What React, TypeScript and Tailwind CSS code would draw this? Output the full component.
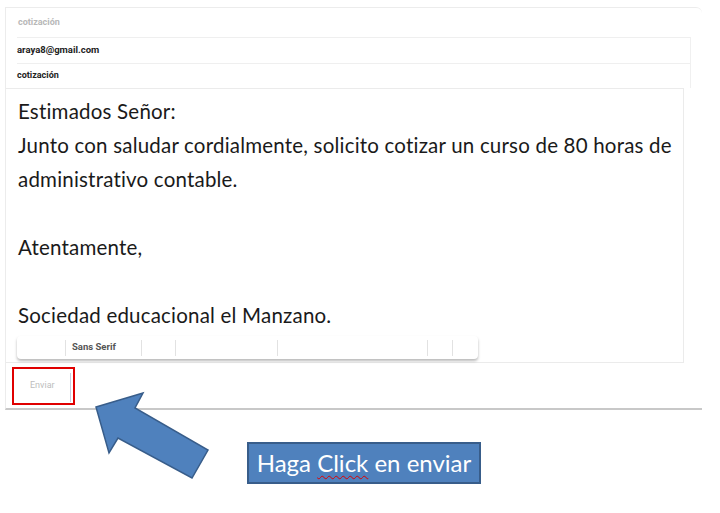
const bodyFont = { fontFamily: 'Lato, "Open Sans", sans-serif' }

function ToolbarSep() {
  return <div className="h-4 w-px bg-[#e2e2e2]" />
}

function Toolbar() {
  return (
    <div className="flex h-[23px] w-[461px] items-center rounded-sm bg-white shadow-[0_2px_3px_rgba(0,0,0,0.28)]">
      <div className="w-[48px]" />
      <ToolbarSep />
      <div className="flex w-[75px] items-center pl-[6px] text-[9.5px] font-bold text-[#555]" style={{ fontFamily: 'Roboto, sans-serif' }}>
        Sans Serif
      </div>
      <ToolbarSep />
      <div className="w-[33px]" />
      <ToolbarSep />
      <div className="w-[101px]" />
      <ToolbarSep />
      <div className="w-[149px]" />
      <ToolbarSep />
      <div className="w-[24px]" />
      <ToolbarSep />
    </div>
  )
}

function Arrow() {
  return (
    <svg className="pointer-events-none absolute left-0 top-0" width="720" height="513" viewBox="0 0 720 513">
      <polygon
        points="96,407 143,393 135,408 208,450 192,478 118,438 109,453"
        fill="#4f81bd"
        stroke="#385d8a"
        strokeWidth="1.5"
        strokeLinejoin="miter"
      />
    </svg>
  )
}

export default function App() {
  const lines = [
    'Estimados Señor:',
    'Junto con saludar cordialmente, solicito cotizar un curso de 80 horas de',
    'administrativo contable.',
    '',
    'Atentamente,',
    '',
    'Sociedad educacional el Manzano.',
  ]

  return (
    <div className="relative h-[513px] w-[720px] overflow-hidden bg-white">
      <div className="pl-[5px] pt-[7px]">
        {/* Email card */}
        <div className="w-[697px] rounded-tr-md border-l border-t border-[#ececec] border-b-2 border-b-[#c8c8c8]" style={{ fontFamily: 'Roboto, sans-serif' }}>
          <div className="flex h-[29px] items-center pl-[12px] text-[9px] font-bold text-[#b8b8b8]">cotización</div>
          <div className="ml-[11px] w-[674px] border-r border-[#f0f0f0]">
            <div className="flex h-[26px] items-center border-t border-[#efefef] text-[9.5px] font-bold text-[#222]">araya8@gmail.com</div>
            <div className="flex h-[25px] items-center border-t border-[#efefef] text-[9px] font-bold text-[#222]">cotización</div>
          </div>

          {/* Editor */}
          <div className="w-[678px] border-r border-b border-t border-[#ebebeb] pb-[3px] pl-[11px] pt-[5px]">
            <div className="pl-[1px] text-[20.5px] leading-[34px] tracking-[0.2px] text-[#1a1a1a]" style={bodyFont}>
              {lines.map((l, i) => (
                <div key={i} className="h-[34px] whitespace-nowrap">{l}</div>
              ))}
            </div>
            <div className="mt-[4px]">
              <Toolbar />
            </div>
          </div>

          {/* Footer */}
          <div className="h-[45px] pl-[6px] pt-[4px]">
            <div className="relative flex h-[38px] w-[63px] items-center">
              <span className="pl-[18px] text-[9px] text-[#bdbdbd]" style={{ fontFamily: 'Roboto, sans-serif' }}>Enviar</span>
              <div className="absolute left-[58px] top-[6px] h-[29px] w-px bg-[#c9cde0]" />
              <div className="absolute inset-0 border-2 border-[#e00000]" />
            </div>
          </div>
        </div>
      </div>

      <Arrow />

      <div
        className="absolute left-[247px] top-[442px] flex h-[42px] w-[234px] items-center justify-center border-2 border-[#385d8a] bg-[#4f81bd] text-[24px] text-white"
        style={bodyFont}
      >
        <span>
          Haga <span className="underline decoration-wavy decoration-[#e00000] decoration-1 underline-offset-[3px]">Click</span> en enviar
        </span>
      </div>
    </div>
  )
}
